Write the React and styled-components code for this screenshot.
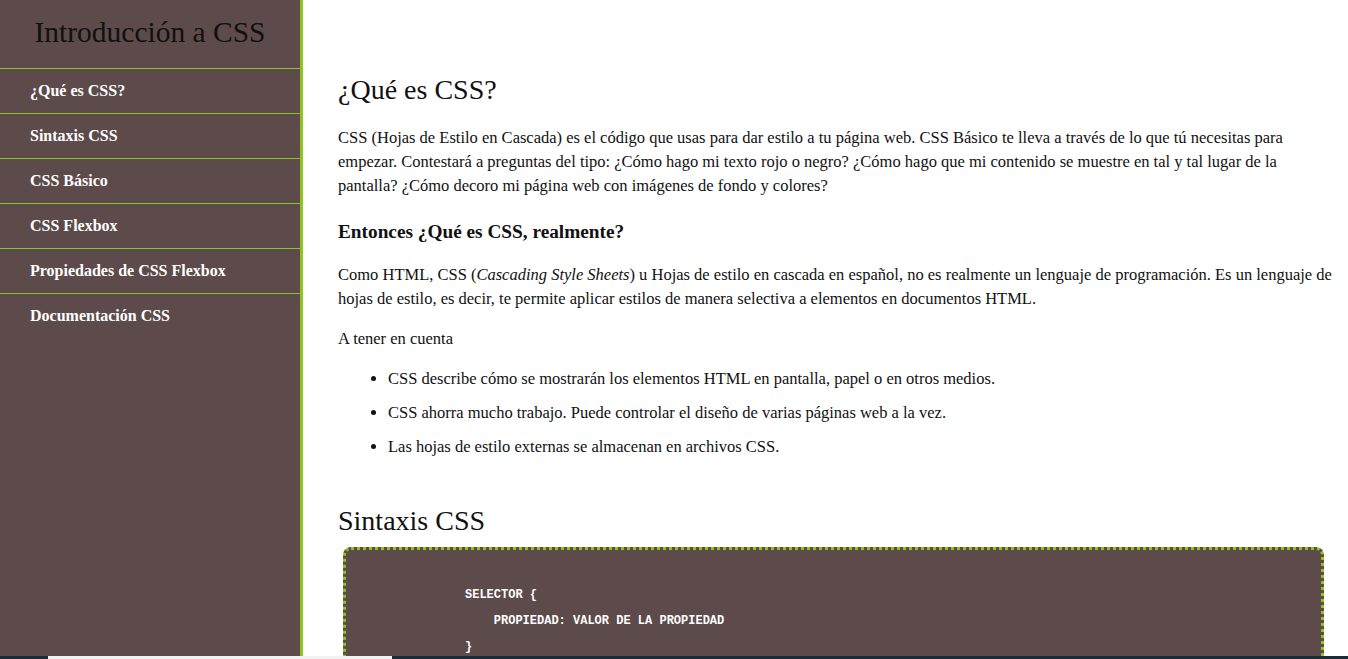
import styled, { createGlobalStyle } from "styled-components";

const GlobalStyle = createGlobalStyle`
  html, body {
    margin: 0;
    padding: 0;
    height: 100%;
    overflow: hidden;
  }
  body {
    font-family: "Liberation Serif", "Times New Roman", serif;
    color: #111;
    background: #fff;
  }
`;

const Layout = styled.div`
  display: flex;
  height: 100vh;
  overflow: hidden;
`;

const Sidebar = styled.nav`
  flex: 0 0 300px;
  background-color: #5d4a4a;
  border-right: 3px solid #8fc31f;
  display: flex;
  flex-direction: column;
`;

const Title = styled.header`
  height: 68px;
  box-sizing: border-box;
  padding-bottom: 4px;
  display: flex;
  align-items: center;
  justify-content: center;
  font-size: 29.5px;
  color: #111;
`;

const NavLink = styled.a`
  display: flex;
  align-items: center;
  height: 44px;
  padding-left: 30px;
  border-top: 1px solid #8fc31f;
  color: #fff;
  font-size: 16px;
  font-weight: bold;
  text-decoration: none;
`;

const Main = styled.main`
  flex: 1;
  padding: 73px 10px 0 35px;
  overflow: hidden;
`;

const Heading = styled.h1`
  margin: 0 0 ${(p) => p.$gap}px;
  font-size: 28px;
  font-weight: normal;
  line-height: 34px;
  color: #111;
`;

const SubHeading = styled.h3`
  margin: 0 0 19px;
  font-size: 19.3px;
  font-weight: bold;
  line-height: 24px;
`;

const Paragraph = styled.p`
  margin: 0 0 ${(p) => p.$gap}px;
  font-size: 16.5px;
  line-height: 24px;
`;

const List = styled.ul`
  margin: 0 0 45px;
  padding-left: 50px;
  display: flex;
  flex-direction: column;
  gap: 10px;
`;

const Item = styled.li`
  font-size: 16.5px;
  line-height: 24px;
`;

const CodeBox = styled.pre`
  margin: 0 14px 0 5px;
  padding: 32px 0 0 119px;
  min-height: 200px;
  background-color: #5d4a4a;
  border: 3px dotted #8fc31f;
  border-radius: 8px;
  color: #fff;
  font-family: "Liberation Mono", "DejaVu Sans Mono", monospace;
  font-size: 12px;
  font-weight: bold;
  line-height: 26px;
`;

const ScrollStrip = styled.div`
  position: fixed;
  left: 0;
  right: 0;
  bottom: 0;
  height: 3px;
  background: #1d2b38;
`;

const ScrollThumb = styled.div`
  margin-left: 48px;
  width: 344px;
  height: 3px;
  background: #f2f2f2;
`;

const links = [
  "¿Qué es CSS?",
  "Sintaxis CSS",
  "CSS Básico",
  "CSS Flexbox",
  "Propiedades de CSS Flexbox",
  "Documentación CSS",
];

export default function App() {
  return (
    <>
      <GlobalStyle />
      <Layout>
        <Sidebar>
          <Title>Introducción a CSS</Title>
          {links.map((l) => (
            <NavLink key={l} href="#">
              {l}
            </NavLink>
          ))}
        </Sidebar>
        <Main>
          <Heading $gap={19}>¿Qué es CSS?</Heading>
          <Paragraph $gap={22}>
            CSS (Hojas de Estilo en Cascada) es el código que usas para dar estilo a tu página web. CSS Básico te lleva a través de lo que tú necesitas para empezar. Contestará a preguntas del tipo: ¿Cómo hago mi texto rojo o negro? ¿Cómo hago que mi contenido se muestre en tal y tal lugar de la pantalla? ¿Cómo decoro mi página web con imágenes de fondo y colores?
          </Paragraph>
          <SubHeading>Entonces ¿Qué es CSS, realmente?</SubHeading>
          <Paragraph $gap={16}>
            Como HTML, CSS (<em>Cascading Style Sheets</em>) u Hojas de estilo en cascada en español, no es realmente un lenguaje de programación. Es un lenguaje de hojas de estilo, es decir, te permite aplicar estilos de manera selectiva a elementos en documentos HTML.
          </Paragraph>
          <Paragraph $gap={16}>A tener en cuenta</Paragraph>
          <List>
            <Item>CSS describe cómo se mostrarán los elementos HTML en pantalla, papel o en otros medios.</Item>
            <Item>CSS ahorra mucho trabajo. Puede controlar el diseño de varias páginas web a la vez.</Item>
            <Item>Las hojas de estilo externas se almacenan en archivos CSS.</Item>
          </List>
          <Heading $gap={9}>Sintaxis CSS</Heading>
          <CodeBox>{`SELECTOR {
    PROPIEDAD: VALOR DE LA PROPIEDAD
}`}</CodeBox>
        </Main>
      </Layout>
      <ScrollStrip>
        <ScrollThumb />
      </ScrollStrip>
    </>
  );
}
